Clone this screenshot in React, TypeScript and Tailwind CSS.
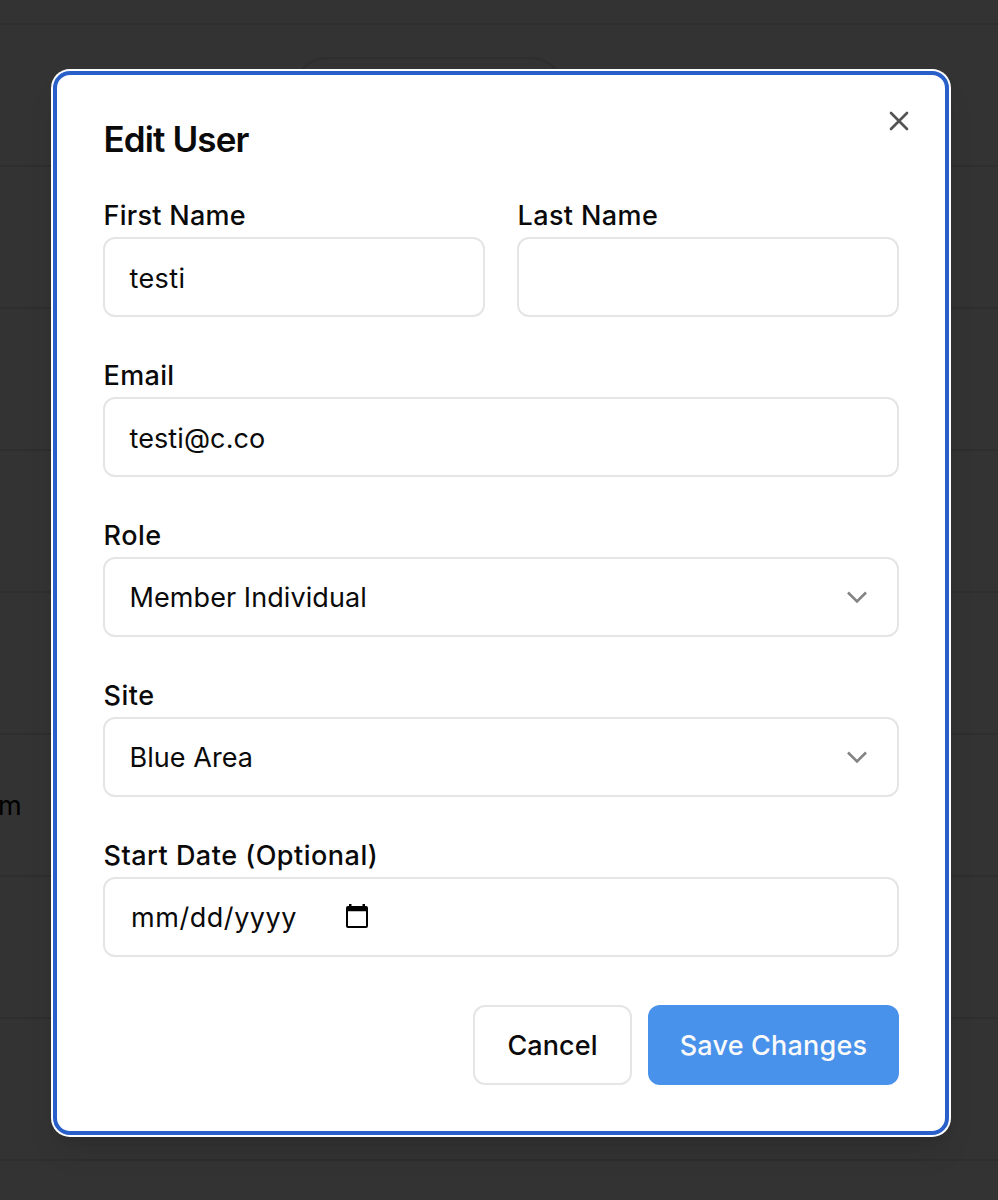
import { ReactNode } from "react";

const rows = ["a", "b", "c", "d", "e", "f", "g", "h"];

function Field({ label, spacing, children }: { label: string; spacing: string; children?: ReactNode }) {
  return (
    <div className="min-w-0 flex-1">
      <div className={`mb-[7px] h-[29px] pt-px pl-[0.5px] text-[27px] leading-[28px] font-medium ${spacing}`}>
        {label}
      </div>
      <div className="flex h-20 items-center rounded-[12px] border-2 border-[#e5e5e5] pr-6 pl-[24.5px] text-[27px] leading-10">
        {children}
      </div>
    </div>
  );
}

function Chevron() {
  return (
    <svg className="ml-auto size-8 text-[#848484]" viewBox="0 0 32 32" fill="none" stroke="currentColor">
      <path d="M7 11.5l9 9 9-9" strokeWidth="2.6" />
    </svg>
  );
}

function CalendarIcon() {
  return (
    <svg className="-mt-[2px] ml-[48.5px] h-6 w-[22px]" viewBox="0 0 22 24" fill="#000">
      <path
        fillRule="evenodd"
        d="M3 0h2.5v2h11V0H19v2h1a2 2 0 0 1 2 2v18a2 2 0 0 1-2 2H2a2 2 0 0 1-2-2V4a2 2 0 0 1 2-2h1zM2 7.3V22h18V7.3z"
      />
    </svg>
  );
}

export default function App() {
  return (
    <div className="relative h-[1200px] w-[998px] overflow-hidden bg-[#333333] font-[Inter,'Liberation_Sans',sans-serif] text-[#0a0a0a]">
      <div className="pt-[23px]">
        {rows.map((row, i) => (
          <div key={row} className="h-[142px] border-t-2 border-[#2e2e2e]">
            {i === 0 && <div className="mt-8 ml-[292px] h-[72px] w-[274px] rounded-full border-2 border-[#2e2e2e]" />}
            {i === 5 && <div className="-ml-[2px] pt-[51px] text-[27px] leading-10 text-black">m</div>}
          </div>
        ))}
        <div className="border-t-2 border-[#2e2e2e]" />
      </div>

      <div
        role="dialog"
        className="absolute top-[69px] left-[51px] h-[1068px] w-[900px] rounded-[19px] bg-white p-[2px] shadow-[0_20px_30px_-6px_rgba(0,0,0,0.1),0_8px_12px_-8px_rgba(0,0,0,0.1)]"
      >
        <div className="relative flex h-full flex-col rounded-[17px] border-4 border-[#285fc9] px-[46px] pt-[46px]">
          <h2 className="pl-[0.5px] text-[35px] leading-9 font-semibold tracking-[-0.88px]">Edit User</h2>
          <button className="absolute top-[30px] right-[30px] size-8 text-[#545454]" aria-label="Close">
            <svg className="size-8" viewBox="0 0 24 24" fill="none" stroke="currentColor">
              <path d="M18 6 6 18M6 6l12 12" strokeWidth="2" strokeLinecap="round" />
            </svg>
          </button>
          <div className="mt-11 flex flex-col gap-11">
            <div className="flex gap-8">
              <Field label="First Name" spacing="tracking-[0.28px]">
                <span className="pt-[3px] tracking-[0.4px]">testi</span>
              </Field>
              <Field label="Last Name" spacing="tracking-[0.4px]" />
            </div>
            <Field label="Email" spacing="tracking-[0.35px]">
              <span className="pt-[3px] tracking-[0.1px]">testi@c.co</span>
            </Field>
            <Field label="Role" spacing="tracking-[0.5px]">
              <span className="pt-[2px] tracking-[0.08px]">Member Individual</span>
              <Chevron />
            </Field>
            <Field label="Site" spacing="tracking-[0.5px]">
              <span className="pt-[2px] tracking-[0.05px]">Blue Area</span>
              <Chevron />
            </Field>
            <Field label="Start Date (Optional)" spacing="tracking-[0.5px]">
              <span className="ml-[1.5px] pt-[2px] tracking-[0.55px]">mm/dd/yyyy</span>
              <CalendarIcon />
            </Field>
          </div>
          <div className="mt-12 flex justify-end gap-4 text-[27px] leading-10 font-medium">
            <button className="h-20 w-[159px] rounded-[12px] border-2 border-[#e5e5e5] pt-[2px] tracking-[0.1px]">
              Cancel
            </button>
            <button className="h-20 w-[251px] rounded-[12px] bg-[#4992eb] pt-[2px] tracking-[0.2px] text-[#fafafa]">
              Save Changes
            </button>
          </div>
        </div>
      </div>
    </div>
  );
}
